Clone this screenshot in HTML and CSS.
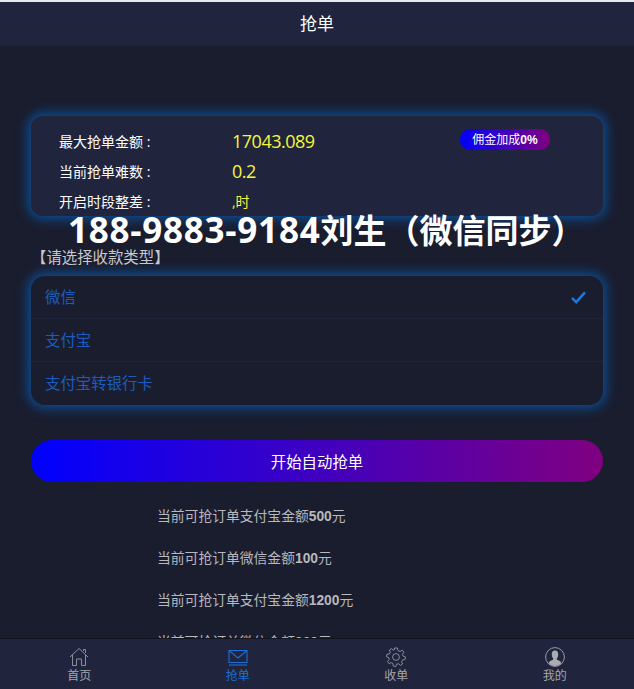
FILE: index.html
```html
<!DOCTYPE html>
<html lang="zh">
<head>
<meta charset="utf-8">
<title>抢单</title>
<link rel="stylesheet" href="styles.css">
</head>
<body>
<header class="topbar">抢单</header>
<main class="content">
  <section class="card">
    <div class="row"><span class="row-label">最大抢单金额 :</span><span class="row-value">17043.089</span><span class="badge">佣金加成<b>0%</b></span></div>
    <div class="row"><span class="row-label">当前抢单难数 :</span><span class="row-value">0.2</span></div>
    <div class="row"><span class="row-label">开启时段整差 :</span><span class="row-value small">,时</span></div>
  </section>
  <div class="watermark"><span class="phone">188-9883-9184</span>刘生（微信同步）</div>
  <h2 class="section-title">【请选择收款类型】</h2>
  <ul class="options">
    <li class="option">微信
      <svg class="check" viewBox="0 0 16 14" width="15" height="13"><path d="M1 7.5 L5.5 12 L15 1.5" fill="none" stroke="#1c7be0" stroke-width="2.6"/></svg>
    </li>
    <li class="option">支付宝</li>
    <li class="option">支付宝转银行卡</li>
  </ul>
  <button class="start">开始自动抢单</button>
  <ul class="notices">
    <li>当前可抢订单支付宝金额<b>500</b>元</li>
    <li>当前可抢订单微信金额<b>100</b>元</li>
    <li>当前可抢订单支付宝金额<b>1200</b>元</li>
    <li>当前可抢订单微信金额<b>300</b>元</li>
  </ul>
</main>
<nav class="tabbar">
  <a class="tab">
    <svg viewBox="0 0 20 20" width="20" height="20" fill="none" stroke="#8a8d9c" stroke-width="1"><path d="M1 10 L10 1.5 L19 10"/><path d="M3.5 8 V18.5 H7.5 V12 H12.5 V18.5 H16.5 V8"/><path d="M14.5 4 V2.5 H16.5 V6"/></svg>
    <span>首页</span>
  </a>
  <a class="tab active">
    <svg viewBox="0 0 20 20" width="20" height="20" fill="none" stroke="#1c6fd8" stroke-width="1.1"><path d="M1 3.5 H19 V15.5 H1 Z"/><path d="M1 3.5 L10 11 L19 3.5"/><path d="M1 18 H19"/></svg>
    <span>抢单</span>
  </a>
  <a class="tab">
    <svg viewBox="0 0 20 20" width="20" height="20" fill="none" stroke="#8a8d9c" stroke-width="1"><circle cx="10" cy="10" r="3.4"/><path d="M8.5 1 H11.5 L12 3.6 L14 4.5 L16.3 3.1 L18 5.2 L16.4 7.3 L17 9 L19.5 10 L19 12.6 L16.6 12.9 L15.6 14.8 L16.6 17 L14.4 18.4 L12.6 16.7 L10.6 17.2 L9.8 19.5 L7.2 19 L7 16.6 L5.2 15.6 L3 16.6 L1.5 14.4 L3.2 12.6 L2.8 10.6 L0.5 9.8 L1 7.2 L3.4 7 L4.4 5.2 L3.4 3 L5.6 1.6 L7.4 3.3 L8.2 3 Z" stroke-linejoin="round"/></svg>
    <span>收单</span>
  </a>
  <a class="tab">
    <svg viewBox="0 0 20 20" width="20" height="20"><circle cx="10" cy="10" r="9.4" fill="none" stroke="#9a9ca8" stroke-width="1"/><path d="M10 3.5 C7.4 3.5 6.6 5.6 6.8 8 C6.9 9.6 7.5 10.6 8.2 11.4 V12.6 C6.4 13.6 4.4 14 3.6 16 C5 18 7.4 19 10 19 C12.6 19 15 18 16.4 16 C15.6 14 13.6 13.6 11.8 12.6 V11.4 C12.5 10.6 13.1 9.6 13.2 8 C13.4 5.6 12.6 3.5 10 3.5 Z" fill="#aaacb2"/></svg>
    <span>我的</span>
  </a>
</nav>
</body>
</html>
```
FILE: styles.css
```css
* { box-sizing: border-box; }
html, body { margin: 0; height: 100%; }
body {
  position: relative;
  height: 689px;
  overflow: hidden;
  background: #1a1d2e;
  border-top: 2px solid #e8e8ee;
  font-family: "Open Sans", "Noto Sans CJK SC", sans-serif;
  color: #fff;
}
.topbar {
  height: 44px;
  line-height: 44px;
  background: #20243c;
  text-align: center;
  font-size: 17px;
}
.content {
  position: relative;
  padding: 70px 31px 0;
}
.card {
  height: 100px;
  padding: 10px 28px 0;
  background: #20243c;
  border-radius: 12px;
  box-shadow: 0 0 12px 3px #0c5099;
}
.row {
  display: flex;
  align-items: center;
  height: 30px;
  position: relative;
}
.row-label {
  width: 173px;
  font-size: 14px;
}
.row-value {
  color: #f6f63c;
  font-size: 18px;
  letter-spacing: -0.5px;
  width: 228px;
}
.row-value.small { font-size: 14px; letter-spacing: 0; }
.badge {
  width: 90px;
  height: 21px;
  margin-top: -4px;
  border-radius: 10px;
  background: linear-gradient(to right, #0000ff, #800080);
  font-size: 12px;
  line-height: 21px;
  text-align: center;
}
.badge b { font-family: "Liberation Sans", sans-serif; }
.watermark {
  position: absolute;
  left: 68px;
  top: 162px;
  font-size: 33px;
  line-height: 44px;
  font-weight: 700;
  white-space: nowrap;
  color: #fff;
}
.phone {
  font-size: 35px;
  letter-spacing: 0.75px;
}
.section-title {
  margin: 32px 0 8px;
  height: 20px;
  font-size: 15.4px;
  line-height: 20px;
  font-weight: 400;
  color: #c8c8cc;
}
.options {
  list-style: none;
  margin: 0;
  padding: 0;
  height: 129px;
  background: #1a1d2e;
  border-radius: 14px;
  box-shadow: 0 0 12px 3px #0c5099;
}
.option {
  display: flex;
  align-items: center;
  justify-content: space-between;
  height: 43px;
  padding: 0 17px 2px 14px;
  font-size: 15.4px;
  color: #1c5bc0;
  border-bottom: 1px solid #20233a;
}
.option:last-child { border-bottom: 0; height: 43px; }
.check { margin-top: 2px; }
.start {
  display: block;
  width: 100%;
  height: 42px;
  margin-top: 35px;
  border: 0;
  border-radius: 21px;
  background: linear-gradient(to right, #0000ff, #800080);
  color: #fff;
  font-family: inherit;
  font-size: 15.4px;
}
.notices {
  list-style: none;
  margin: 14px 0 0;
  padding: 0 0 0 126px;
  font-size: 13.8px;
  color: #b8b8be;
}
.notices li {
  height: 42px;
  line-height: 40px;
}
.notices b {
  font-family: "Liberation Sans", sans-serif;
  font-weight: 700;
}
.tabbar {
  position: absolute;
  left: 0;
  right: 0;
  bottom: 0;
  height: 51px;
  display: grid;
  grid-template-columns: repeat(4, 1fr);
  background: #20243c;
  border-top: 1px solid #12141f;
}
.tab {
  display: flex;
  flex-direction: column;
  align-items: center;
  padding-top: 8px;
  font-size: 12px;
  line-height: 16px;
  color: #a4a6b0;
}
.tab svg { display: block; margin-bottom: 1px; }
.tab.active { color: #1c6fd8; }
```
